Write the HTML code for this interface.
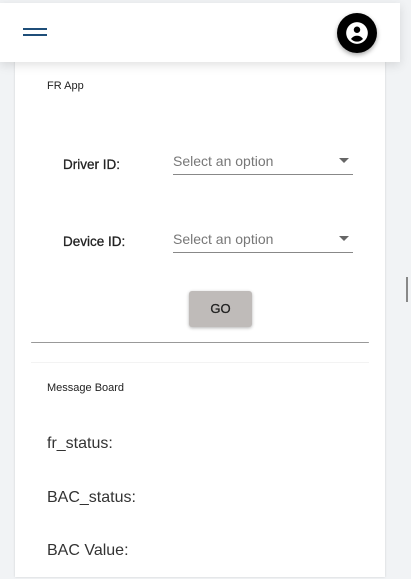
<!DOCTYPE html>
<html><head><style>
body{margin:0;width:411px;height:579px;background:#f1f3f5;position:relative;overflow:hidden;font-family:"Liberation Sans",sans-serif;color:#222}
.a{position:absolute}
</style></head><body>
<div class="a" style="left:15px;top:50px;width:370px;height:527px;background:#fff;box-shadow:0 0 2px rgba(0,0,0,.15)"></div>
<div class="a" style="left:31px;top:342px;width:338px;height:1px;background:#999;border-radius:2px"></div>
<div class="a" style="left:31px;top:362px;width:338px;height:1px;background:#f3f3f3"></div>
<div class="a" style="left:0;top:3px;width:400px;height:59px;background:#fff;box-shadow:0 3px 10px rgba(0,0,0,.12)"></div>
<div class="a" style="left:23px;top:28px;width:24px;height:2px;background:#1f4e79"></div>
<div class="a" style="left:23px;top:34px;width:24px;height:2px;background:#1f4e79"></div>
<div class="a" style="left:337px;top:13px;width:40px;height:40px;border-radius:50%;background:#000;box-shadow:0 2px 5px rgba(0,0,0,.35)"></div>
<svg class="a" style="left:344px;top:20px" width="26" height="26" viewBox="0 0 24 24"><circle cx="12" cy="12" r="10" fill="#fff"/><circle cx="12" cy="9" r="3" fill="#000"/><path d="M6.5 17.5c1.5-2.3 3.4-3 5.5-3s4 .7 5.5 3A8 8 0 0 1 12 20a8 8 0 0 1-5.5-2.5z" fill="#000"/></svg>
<div class="a" style="left:406px;top:277px;width:2px;height:25px;background:#888"></div>
<div class="a" style="left:47px;top:80px;font-size:11px">FR App</div>
<div class="a" style="left:63px;top:157px;font-size:13.5px;color:#222;-webkit-text-stroke:0.3px #222">Driver ID:</div>
<div class="a" style="left:173px;top:153px;font-size:14px;color:#777">Select an option</div>
<div class="a" style="left:339px;top:158px;width:0;height:0;border:5px solid transparent;border-top-color:#666;border-bottom:0"></div>
<div class="a" style="left:173px;top:174px;width:180px;height:1px;background:#888"></div>
<div class="a" style="left:63px;top:234px;font-size:13.5px;color:#222;-webkit-text-stroke:0.3px #222">Device ID:</div>
<div class="a" style="left:173px;top:231px;font-size:14px;color:#777">Select an option</div>
<div class="a" style="left:339px;top:236px;width:0;height:0;border:5px solid transparent;border-top-color:#666;border-bottom:0"></div>
<div class="a" style="left:173px;top:252px;width:180px;height:1px;background:#888"></div>
<div class="a" style="left:189px;top:291px;width:63px;height:36px;background:#bfbbb9;border-radius:3px;box-shadow:0 1px 3px rgba(0,0,0,.3);font-size:13px;line-height:36px;text-align:center;color:#222;-webkit-text-stroke:0.3px #222">GO</div>
<div class="a" style="left:47px;top:382px;font-size:11px">Message Board</div>
<div class="a" style="left:47px;top:435px;font-size:16px;color:#333">fr_status:</div>
<div class="a" style="left:47px;top:489px;font-size:16px;color:#333">BAC_status:</div>
<div class="a" style="left:47px;top:542px;font-size:16px;color:#333">BAC Value:</div>
</body></html>
